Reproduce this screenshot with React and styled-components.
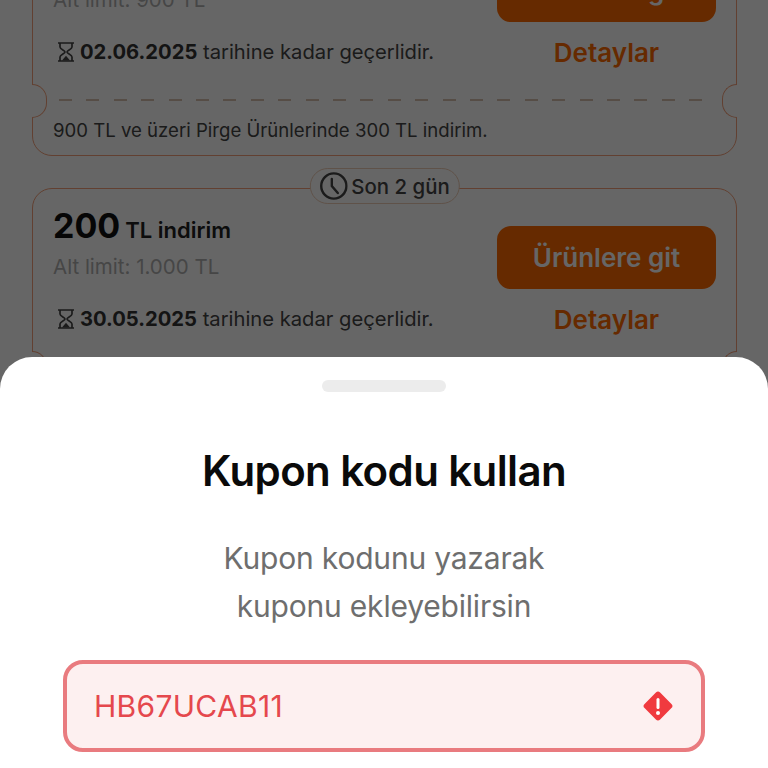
import React from 'react';
import styled, { createGlobalStyle } from 'styled-components';

const GlobalStyle = createGlobalStyle`
  html, body {
    margin: 0;
    padding: 0;
    background: #fff;
  }

  body {
    font-family: Inter, "Liberation Sans", sans-serif;
  }
`;

const Screen = styled.div`
  position: relative;
  width: 768px;
  height: 768px;
  overflow: hidden;
  background: #fff;
`;

const List = styled.div`
  display: flex;
  flex-direction: column;
  gap: 32px;
  margin-top: -79px;
  padding: 0 31px 0 32px;
`;

const Card = styled.div`
  position: relative;
  border: 1px solid #f4a07a;
  border-radius: 20px;
  padding: 16px 20px 12px;
`;

const Top = styled.div`
  display: flex;
  justify-content: space-between;
  align-items: flex-start;
`;

const Info = styled.div`
  display: flex;
  flex-direction: column;
`;

const Amount = styled.div`
  display: flex;
  align-items: baseline;
  gap: 5px;
  font-size: 22px;
  font-weight: 600;
  color: #222;
  line-height: 42px;

  b {
    font-size: 34px;
    font-weight: 700;
    color: #111;
  }
`;

const Limit = styled.div`
  margin-top: 2px;
  font-size: 20.5px;
  color: #b0b0b0;
  line-height: 28px;
`;

const Valid = styled.div`
  display: flex;
  align-items: center;
  gap: 4px;
  margin-top: 24px;
  padding-left: 3px;
  font-size: 20.2px;
  color: #444;
  line-height: 28px;

  b {
    font-weight: 700;
    color: #333;
  }

  svg {
    flex: none;
  }
`;

const Actions = styled.div`
  display: flex;
  flex-direction: column;
  align-items: center;
  width: 219px;
  padding-top: 21px;
`;

const GoButton = styled.button`
  width: 219px;
  height: 63px;
  border: 0;
  border-radius: 14px;
  background: #ff6a00;
  color: #fff;
  font: 600 26px Inter, "Liberation Sans", sans-serif;
`;

const Details = styled.div`
  margin-top: 14px;
  font-size: 26px;
  font-weight: 600;
  color: #ff6a00;
  line-height: 34px;
`;

const Dashed = styled.div`
  height: 2px;
  margin: 29px 10px 0 6px;
  background: repeating-linear-gradient(to right, #d8c0b0 0 13px, transparent 13px 27.4px);
`;

const Note = styled.div`
  margin-top: 16px;
  font-size: 18.6px;
  color: #444;
  line-height: 26px;
`;

const Notch = styled.span`
  position: absolute;
  top: 162px;
  ${p => p.$side}: -1px;
  width: 14px;
  height: 32px;
  background: #fff;
  border: 1px solid #f4a07a;
  ${p => (p.$side === 'left'
    ? 'border-left: 0; border-radius: 0 16px 16px 0;'
    : 'border-right: 0; border-radius: 16px 0 0 16px;')}
`;

const Tag = styled.div`
  position: absolute;
  top: -21px;
  left: 50%;
  transform: translateX(-50%);
  display: flex;
  align-items: center;
  gap: 4px;
  height: 36px;
  box-sizing: border-box;
  padding: 0 9px;
  border: 1px solid #eecdb6;
  border-radius: 18px;
  background: #fff;
  font-size: 20.4px;
  font-weight: 500;
  color: #444;
  white-space: nowrap;
`;

const Overlay = styled.div`
  position: absolute;
  inset: 0;
  background: rgba(0, 0, 0, 0.6);
`;

const Sheet = styled.div`
  position: absolute;
  left: 0;
  right: 0;
  top: 357px;
  bottom: 0;
  display: flex;
  flex-direction: column;
  align-items: center;
  background: #fff;
  border-radius: 32px 32px 0 0;
`;

const Handle = styled.div`
  width: 124px;
  height: 12px;
  margin-top: 23px;
  border-radius: 6px;
  background: #ececec;
`;

const Title = styled.h2`
  margin: 51px 0 0;
  font-size: 42px;
  font-weight: 600;
  letter-spacing: -0.6px;
  line-height: 56px;
  color: #0a0a0a;
`;

const Subtitle = styled.p`
  margin: 35px 0 0;
  font-size: 30px;
  font-weight: 400;
  letter-spacing: -0.2px;
  line-height: 48px;
  color: #6e6e6e;
  text-align: center;
`;

const Field = styled.div`
  display: flex;
  justify-content: space-between;
  align-items: center;
  width: 642px;
  height: 92px;
  box-sizing: border-box;
  margin-top: 30px;
  padding: 0 27px;
  border: 4px solid #e97b7f;
  border-radius: 20px;
  background: #fdf0f0;
  font-size: 30px;
  letter-spacing: 0.3px;
  color: #e5484d;
`;

const Hourglass = () => (
  <svg width="20" height="22" viewBox="0 0 20 22" fill="none" stroke="currentColor" strokeWidth="1.7">
    <path d="M2 2h16M2 20h16M4 2v4c0 2.4 5 3.4 5 5s-5 2.6-5 5v4M16 2v4c0 2.4-5 3.4-5 5s5 2.6 5 5v4" />
    <path d="M6 19.4l4-4.6 4 4.6z" fill="currentColor" stroke="none" />
  </svg>
);

const Clock = () => (
  <svg width="28" height="28" viewBox="0 0 28 28" fill="none" stroke="#444" strokeWidth="2.4" strokeLinecap="round">
    <circle cx="14" cy="14" r="12.6" />
    <path d="M12 7v7l6 7" />
  </svg>
);

const Warning = () => (
  <svg width="32" height="32" viewBox="0 0 32 32">
    <rect x="5" y="5" width="22" height="22" rx="3" transform="rotate(45 16 16)" fill="#f03a3f" />
    <rect x="14.5" y="8" width="3" height="11" rx="1.5" fill="#fff" />
    <circle cx="16" cy="23" r="2" fill="#fff" />
  </svg>
);

const Coupon = ({ amount, limit, date, note, tag }) => (
  <Card>
    {tag && <Tag><Clock />{tag}</Tag>}
    <Top>
      <Info>
        <Amount><b>{amount}</b>TL indirim</Amount>
        <Limit>Alt limit: {limit} TL</Limit>
        <Valid><Hourglass /><span><b>{date}</b> tarihine kadar geçerlidir.</span></Valid>
      </Info>
      <Actions>
        <GoButton>Ürünlere git</GoButton>
        <Details>Detaylar</Details>
      </Actions>
    </Top>
    <Dashed />
    <Note>{note}</Note>
    <Notch $side="left" />
    <Notch $side="right" />
  </Card>
);

export default function App() {
  return (
    <Screen>
      <GlobalStyle />
      <List>
        <Coupon amount="300" limit="900" date="02.06.2025" note="900 TL ve üzeri Pirge Ürünlerinde 300 TL indirim." />
        <Coupon amount="200" limit="1.000" date="30.05.2025" tag="Son 2 gün" note="1.000 TL ve üzeri Pirge Ürünlerinde 200 TL indirim." />
      </List>
      <Overlay />
      <Sheet>
        <Handle />
        <Title>Kupon kodu kullan</Title>
        <Subtitle>Kupon kodunu yazarak<br />kuponu ekleyebilirsin</Subtitle>
        <Field>HB67UCAB11<Warning /></Field>
      </Sheet>
    </Screen>
  );
}
